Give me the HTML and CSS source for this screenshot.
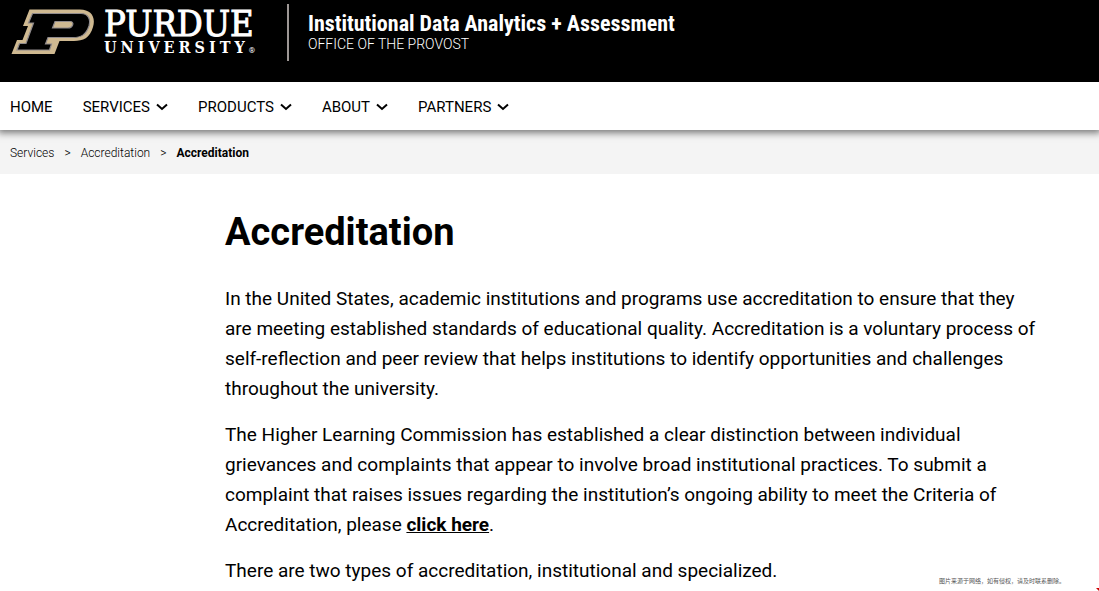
FILE: index.html
```html
<!DOCTYPE html>
<html lang="en">
<head>
    <meta charset="UTF-8">
    <meta name="viewport" content="width=device-width, initial-scale=1.0">
    <title>Accreditation - Institutional Data Analytics + Assessment</title>
    <link rel="stylesheet" href="styles.css">
</head>
<body>
    <header class="header">
        <a class="logo" href="#" aria-label="Purdue University">
            <svg class="logo-mark" viewBox="0 0 84 46" width="84" height="46" aria-hidden="true">
                <path fill="#cfb991" d="M18.500 0.500H69C80 0.500 85 8 82 18C79 29 72 32 63 32H48.500L43.500 45H0.500L6 31H11.500L17 17H12Z"/>
                <path fill="#000" stroke="#8f8a8c" stroke-width="1.200" d="M21.500 4.500H70C77 4.500 80 10 78 17C75 26 70 28.500 62 28.500H37L34.500 35H40.500L38.500 41H6L8.500 34.500H15L22.500 14H17.500Z"/>
                <path fill="#cfb991" stroke="#8f8a8c" stroke-width="1.200" d="M44 12.500H59C64 12.500 62 19 57 19H41.500Z"/>
            </svg>
            <span class="wordmark">
                <span class="wordmark-top">PURDUE</span>
                <span class="wordmark-bottom">UNIVERSITY<small>®</small></span>
            </span>
        </a>
        <div class="site-title">
            <a class="site-name" href="#">Institutional Data Analytics + Assessment</a>
            <a class="site-office" href="#">OFFICE OF THE PROVOST</a>
        </div>
    </header>

    <nav class="navbar" aria-label="Main">
        <a class="nav-item" href="#">HOME</a>
        <button class="nav-item" type="button">SERVICES <svg class="chevron" viewBox="0 0 12 8" aria-hidden="true"><path d="M1 1.500L6 6L11 1.500"/></svg></button>
        <button class="nav-item" type="button">PRODUCTS <svg class="chevron" viewBox="0 0 12 8" aria-hidden="true"><path d="M1 1.500L6 6L11 1.500"/></svg></button>
        <button class="nav-item" type="button">ABOUT <svg class="chevron" viewBox="0 0 12 8" aria-hidden="true"><path d="M1 1.500L6 6L11 1.500"/></svg></button>
        <button class="nav-item" type="button">PARTNERS <svg class="chevron" viewBox="0 0 12 8" aria-hidden="true"><path d="M1 1.500L6 6L11 1.500"/></svg></button>
    </nav>

    <nav class="breadcrumb" aria-label="Breadcrumb">
        <a href="#">Services</a>
        <span>&gt;</span>
        <a href="#">Accreditation</a>
        <span>&gt;</span>
        <strong>Accreditation</strong>
    </nav>

    <main class="content">
        <h1>Accreditation</h1>
        <p>In the United States, academic institutions and programs use accreditation to ensure that they are meeting established standards of educational quality. Accreditation is a voluntary process of self-reflection and peer review that helps institutions to identify opportunities and challenges throughout the university.</p>
        <p>The Higher Learning Commission has established a clear distinction between individual grievances and complaints that appear to involve broad institutional practices. To submit a complaint that raises issues regarding the institution’s ongoing ability to meet the Criteria of Accreditation, please <a href="#">click here</a>.</p>
        <p>There are two types of accreditation, institutional and specialized.</p>
    </main>

    <div class="source-note" lang="zh-CN">图片来源于网络，如有侵权，请及时联系删除。</div>
    <div class="corner-mark"></div>
</body>
</html>
```
FILE: styles.css
```css
* {
    box-sizing: border-box;
}
body {
    margin: 0;
    position: relative;
    min-height: 100vh;
    overflow-x: hidden;
    font-family: Roboto, "Liberation Sans", sans-serif;
    color: #000;
    background-color: #fff;
}
a {
    color: inherit;
    text-decoration: none;
}
.header {
    display: flex;
    align-items: flex-start;
    min-height: 82px;
    padding: 4px 11px 20px;
    color: #fff;
    background-color: #000;
}
.logo {
    display: flex;
    gap: 9px;
    padding: 5px 28px 0 0;
}
.wordmark {
    display: flex;
    flex-direction: column;
    font-family: "DejaVu Serif Condensed", "DejaVu Serif", serif;
}
.wordmark-top {
    font-size: 36px;
    line-height: 30px;
    -webkit-text-stroke: 1px #fff;
}
.wordmark-bottom {
    font-size: 16px;
    line-height: 18px;
    font-weight: bold;
    letter-spacing: 4px;
}
.wordmark-bottom small {
    font-family: Roboto, sans-serif;
    font-size: 8px;
    font-weight: normal;
    letter-spacing: 0;
}
.site-title {
    display: flex;
    flex-direction: column;
    margin-left: 4px;
    padding: 8px 0 8px 19px;
    border-left: 2px solid #9d9795;
}
.site-name {
    font-family: "Roboto Condensed", "Liberation Sans Narrow", "DejaVu Sans Condensed", sans-serif;
    font-size: 22px;
    line-height: 24px;
    font-weight: bold;
}
.site-office {
    font-size: 14px;
    line-height: 17px;
    font-weight: 300;
}
.navbar {
    position: relative;
    display: flex;
    gap: 30px;
    height: 48px;
    padding: 2px 10px 0;
    background-color: #fff;
    box-shadow: 0 1px 7px 2px rgba(0, 0, 0, 0.5);
    clip-path: inset(0 0 -16px 0);
}
.nav-item {
    display: flex;
    align-items: center;
    gap: 6px;
    padding: 0;
    border: none;
    background: none;
    color: #000;
    font-family: inherit;
    font-size: 15px;
    cursor: pointer;
}
.chevron {
    width: 12px;
    height: 8px;
    fill: none;
    stroke: #000;
    stroke-width: 2;
}
.breadcrumb {
    display: flex;
    align-items: center;
    gap: 10px;
    height: 44px;
    padding: 2px 10px 0;
    font-size: 12px;
    font-weight: 300;
    background-color: #f4f4f4;
}
.breadcrumb strong {
    font-weight: bold;
}
.content {
    max-width: 1060px;
    padding: 33px 20px 0 225px;
}
h1 {
    margin: 0 0 27px;
    font-size: 38px;
    line-height: 50px;
}
p {
    margin: 0 0 16px;
    font-size: 19px;
    line-height: 30px;
}
p:last-child {
    margin-bottom: 0;
}
p a {
    font-weight: bold;
    text-decoration: underline;
}
.source-note {
    position: absolute;
    right: 34px;
    bottom: 5px;
    font-family: "Noto Sans CJK SC", sans-serif;
    font-size: 6px;
    line-height: 10px;
    color: #555;
}
.corner-mark {
    position: absolute;
    right: 0;
    bottom: 0;
    border-top: 3px solid #c00;
    border-left: 3px solid transparent;
}
```
